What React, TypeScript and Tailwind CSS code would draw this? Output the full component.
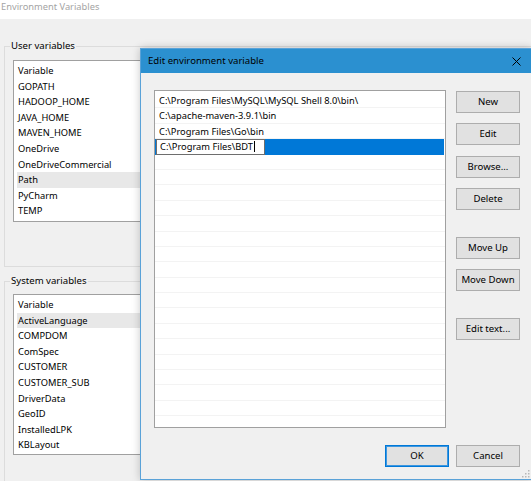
import React from "react";

const userVars = [
  "Variable",
  "GOPATH",
  "HADOOP_HOME",
  "JAVA_HOME",
  "MAVEN_HOME",
  "OneDrive",
  "OneDriveCommercial",
  "Path",
  "PyCharm",
  "TEMP",
];

const sysVars = [
  "Variable",
  "ActiveLanguage",
  "COMPDOM",
  "ComSpec",
  "CUSTOMER",
  "CUSTOMER_SUB",
  "DriverData",
  "GeoID",
  "InstalledLPK",
  "KBLayout",
];

const paths = [
  "C:\\Program Files\\MySQL\\MySQL Shell 8.0\\bin\\",
  "C:\\apache-maven-3.9.1\\bin",
  "C:\\Program Files\\Go\\bin",
];

function VarList({ items, selected, h }: { items: string[]; selected: number; h: string }) {
  return (
    <div className={`ml-[8px] w-[400px] overflow-hidden border border-[#a0a0a0] bg-white pt-[2px] ${h}`}>
      {items.map((t, i) => (
        <div
          key={i}
          className={`ml-[3px] h-[15.6px] pl-[1px] leading-[16px] ${i === selected ? "bg-[#e8e8e8]" : ""}`}
        >
          {t}
        </div>
      ))}
    </div>
  );
}

function Btn({ children, primary }: { children: React.ReactNode; primary?: boolean }) {
  return (
    <div
      className={`flex h-[22px] w-[64px] items-center justify-center border bg-[#e1e1e1] text-[9.6px] ${
        primary ? "border-[#0078d7] shadow-[inset_0_0_0_1px_#3d97e0]" : "border-[#adadad]"
      }`}
    >
      {children}
    </div>
  );
}

export default function App() {
  const rows = Array.from({ length: 22 });
  return (
    <div className="relative h-[481px] w-[531px] overflow-hidden bg-[#f0f0f0] font-['Noto_Sans','Liberation_Sans',sans-serif] text-[9.3px] text-black">
      <div className="h-[19px] bg-white pl-[1px] leading-[14px] text-[#a4a4a4]">Environment Variables</div>

      <fieldset className="ml-[4px] mt-[20px] w-[600px] border border-[#dcdcdc] pb-[44px]">
        <legend className="ml-[5px] px-[1px] text-[9.6px] leading-[14px]">User variables</legend>
        <div className="mt-[7px]">
          <VarList items={userVars} selected={7} h="h-[162px]" />
        </div>
      </fieldset>

      <fieldset className="ml-[4px] mt-[7px] h-[300px] w-[600px] border border-[#dcdcdc]">
        <legend className="ml-[5px] px-[1px] text-[9.6px] leading-[14px]">System variables</legend>
        <div className="mt-[6px]">
          <VarList items={sysVars} selected={1} h="h-[161px]" />
        </div>
      </fieldset>

      {/* Edit dialog window */}
      <div className="absolute left-[140px] top-[48px] flex h-[432px] w-[392px] flex-col border border-[#5aa2d8] bg-[#f0f0f0] shadow-[0_0_8px_rgba(0,0,0,0.22)]">
        <div className="flex h-[24px] items-center bg-[#2b90d0] pl-[7px] pt-[1px]">
          <span className="text-[9.6px]">Edit environment variable</span>
          <svg className="ml-auto mr-[10px]" width="9" height="9" viewBox="0 0 9 9">
            <path d="M0.5 0.5 L8.5 8.5 M8.5 0.5 L0.5 8.5" stroke="#000" strokeWidth="1" fill="none" />
          </svg>
        </div>

        <div className="flex pl-[13px] pt-[17px]">
          <div className="h-[338px] w-[292px] overflow-hidden border border-[#a0a0a0] bg-white pt-[2px]">
            {rows.map((_, i) => {
              if (i === 3) {
                return (
                  <div key={i} className="mr-[1px] flex h-[15.4px] items-stretch bg-[#0078d7]">
                    <div className="ml-[1px] flex h-[15.4px] items-center border border-[#6e6e6e] bg-white pl-[3px] pr-[9px]">
                      <span>C:\Program Files\BDT</span>
                      <span className="ml-[1px] h-[11px] w-[1px] bg-black" />
                    </div>
                  </div>
                );
              }
              return (
                <div key={i} className="h-[15.4px] border-b border-[#f3f3f3] pl-[4px] leading-[15px]">
                  {paths[i] ?? ""}
                </div>
              );
            })}
          </div>

          <div className="ml-[10px] flex flex-col pt-[1px]">
            <Btn>New</Btn>
            <div className="mt-[10px]">
              <Btn>Edit</Btn>
            </div>
            <div className="mt-[11px]">
              <Btn>Browse...</Btn>
            </div>
            <div className="mt-[10px]">
              <Btn>Delete</Btn>
            </div>
            <div className="mt-[27px]">
              <Btn>Move Up</Btn>
            </div>
            <div className="mt-[10px]">
              <Btn>Move Down</Btn>
            </div>
            <div className="mt-[27px]">
              <Btn>Edit text...</Btn>
            </div>
          </div>
        </div>

        <div className="mt-auto flex justify-end gap-[7px] pb-[12px] pr-[11px]">
          <Btn primary>OK</Btn>
          <Btn>Cancel</Btn>
        </div>

        <svg className="absolute bottom-[1px] right-[1px]" width="8" height="8" viewBox="0 0 8 8">
          <rect x="6" y="0" width="1.5" height="1.5" fill="#b8b8b8" />
          <rect x="3" y="3" width="1.5" height="1.5" fill="#b8b8b8" />
          <rect x="6" y="3" width="1.5" height="1.5" fill="#b8b8b8" />
          <rect x="0" y="6" width="1.5" height="1.5" fill="#b8b8b8" />
          <rect x="3" y="6" width="1.5" height="1.5" fill="#b8b8b8" />
          <rect x="6" y="6" width="1.5" height="1.5" fill="#b8b8b8" />
        </svg>
      </div>
    </div>
  );
}
